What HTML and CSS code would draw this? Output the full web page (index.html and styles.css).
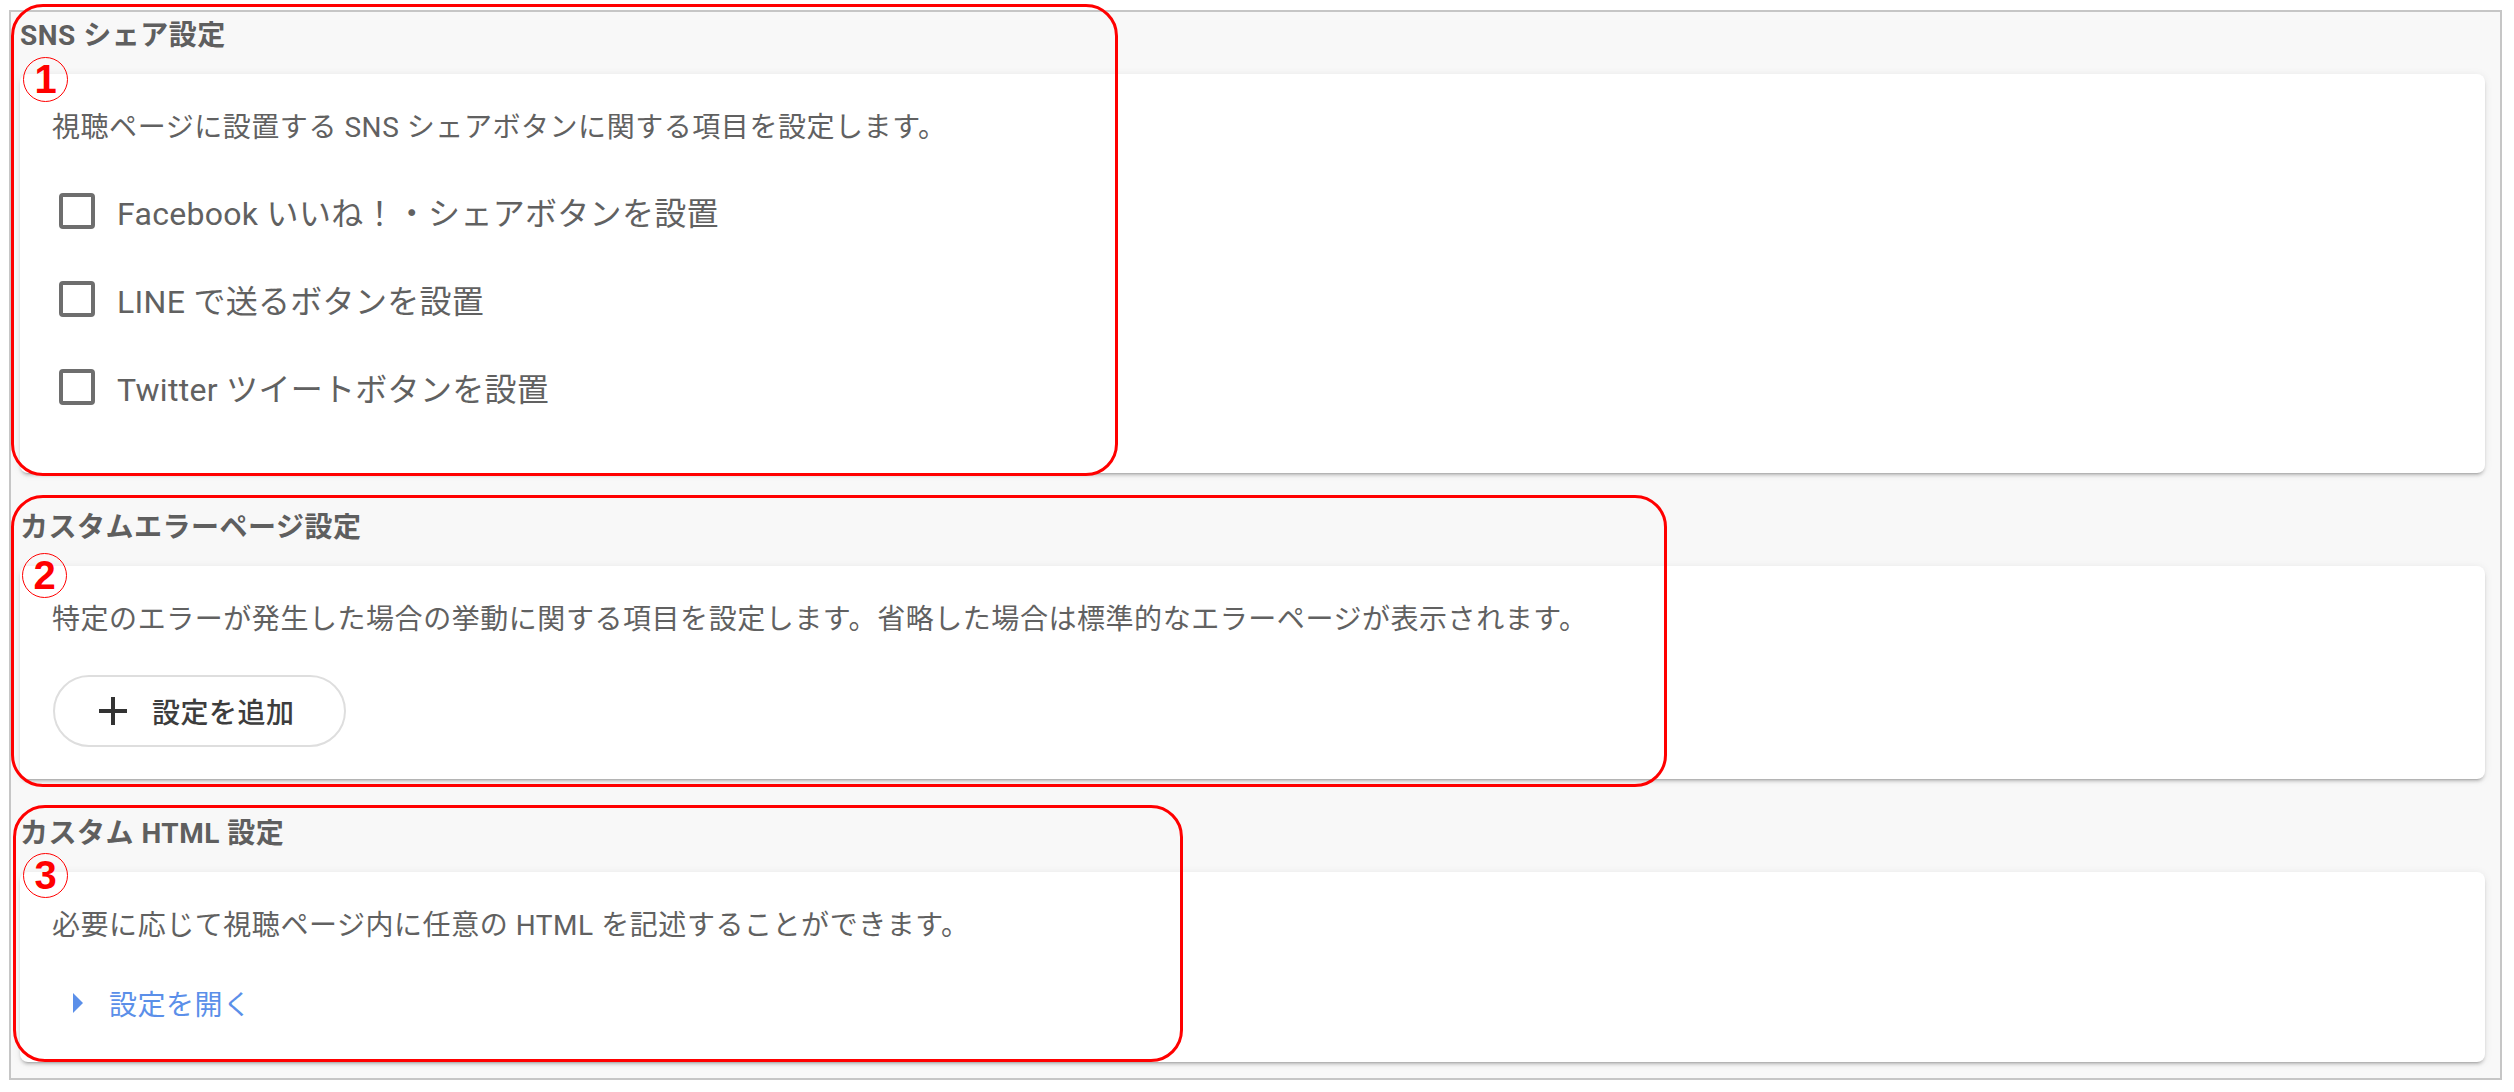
FILE: index.html
```html
<!DOCTYPE html>
<html lang="ja">
<head>
  <meta charset="utf-8">
  <title>配信設定</title>
  <link rel="stylesheet" href="styles.css">
</head>
<body>
<div class="frame">

  <!-- SNS share -->
  <section class="section">
    <h3 class="title">SNS シェア設定</h3>
    <div class="card">
      <p class="desc">視聴ページに設置する SNS シェアボタンに関する項目を設定します。</p>
      <div class="checks">
        <label class="check"><span class="box"></span>Facebook いいね！・シェアボタンを設置</label>
        <label class="check"><span class="box"></span>LINE で送るボタンを設置</label>
        <label class="check"><span class="box"></span>Twitter ツイートボタンを設置</label>
      </div>
    </div>
    <div class="note note-1"></div>
    <span class="badge badge-1">1</span>
  </section>

  <!-- custom error page -->
  <section class="section">
    <h3 class="title">カスタムエラーページ設定</h3>
    <div class="card">
      <p class="desc">特定のエラーが発生した場合の挙動に関する項目を設定します。省略した場合は標準的なエラーページが表示されます。</p>
      <button class="add-btn">
        <svg viewBox="0 0 24 24" width="48" height="48"><path d="M19 13h-6v6h-2v-6H5v-2h6V5h2v6h6v2z" fill="#333"/></svg>
        <span>設定を追加</span>
      </button>
    </div>
    <div class="note note-2"></div>
    <span class="badge badge-2">2</span>
  </section>

  <!-- custom html -->
  <section class="section">
    <h3 class="title">カスタム HTML 設定</h3>
    <div class="card">
      <p class="desc">必要に応じて視聴ページ内に任意の HTML を記述することができます。</p>
      <a class="toggle" href="#">
        <svg viewBox="0 0 24 24" width="48" height="48"><path d="M10 17l5-5-5-5v10z" fill="#5b8fe9"/></svg>
        <span>設定を開く</span>
      </a>
    </div>
    <div class="note note-3"></div>
    <span class="badge badge-3">3</span>
  </section>

</div>
</body>
</html>
```

FILE: styles.css
```css
body {margin:0; background:#fff; font-family:Roboto, "Noto Sans CJK JP", sans-serif; color:#616161;}

.frame {margin:10px 12px 0 9px; border:2px solid #c6c6c6; background:#f8f8f8; padding:4px 15px 16px 9px;}

.section {position:relative; margin-top:35px;}
.section:first-child {margin-top:0;}

.title {margin:0 0 18px; font-size:28px; line-height:40px; font-weight:700; color:#5f5f5f; letter-spacing:0.5px;}

.card {background:#fff; border-radius:8px; padding:34px 32px 32px;
  box-shadow:0 4px 2px -3px rgba(0,0,0,.2), 0 3px 3px 0 rgba(0,0,0,.12), 0 1px 8px 0 rgba(0,0,0,.08);}
.section:first-child .card {padding-bottom:42px;}
.section:last-child .card {padding-bottom:35px;}

.desc {margin:0; font-size:28px; line-height:40px; letter-spacing:0.55px; color:#616161;}

.checks {margin-top:19px;}
.check {display:flex; align-items:center; height:88px; font-size:32px; letter-spacing:0.3px; color:#616161;}
.box {width:36px; height:36px; box-sizing:border-box; border:4px solid #6e6e6e; border-radius:4px; margin:0 22px 0 7px; flex:none;}

.add-btn {display:inline-flex; align-items:center; height:72px; margin:35px 0 0 1px; padding:0 49px 0 34px;
  border:2px solid #dedede; border-radius:36px; background:#fff; font-family:inherit; font-size:28px; font-weight:500;
  letter-spacing:0.5px; color:#3d3d3d;}
.add-btn span {margin-left:15px;}

.toggle {display:flex; align-items:center; height:48px; margin-top:33px; margin-left:1px; font-size:28px; color:#5b8fe9; text-decoration:none; letter-spacing:0.5px;}
.toggle span {margin-left:8px;}

/* red annotation overlay */
.note {position:absolute; border:3px solid #ff0000; border-radius:32px; pointer-events:none;}
.note-1 {left:-9px; top:-12px; width:1101px; height:466px;}
.note-2 {left:-9px; top:-13px; width:1650px; height:286px;}
.note-3 {left:-7px; top:-9px; width:1164px; height:251px;}

.badge {position:absolute; width:43px; height:43px; border:1.5px solid #ff0000; border-radius:50%;
  color:#ff0000; font:700 40px/43px "Liberation Sans", Arial, sans-serif; text-align:center;}
.badge-1 {left:3px; top:41px;}
.badge-2 {left:2px; top:45px;}
.badge-3 {left:3px; top:39px;}
```
